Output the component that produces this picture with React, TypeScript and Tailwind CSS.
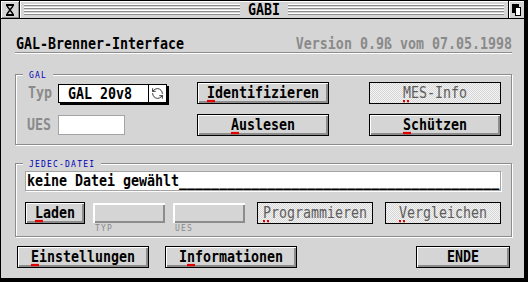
import { RefreshCcw } from 'lucide-react';

type BtnProps = {
  text: string;
  hot?: number;
  w: string;
  disabled?: boolean;
  className?: string;
};

// the Atari system font is taller than DejaVu at the same width
const tall = 'inline-block scale-y-[1.15]';

const Hot = ({ text, hot, disabled }: { text: string; hot?: number; disabled?: boolean }) => {
  if (hot === undefined) return <>{text}</>;
  return (
    <>
      {text.slice(0, hot)}
      <span
        className={
          disabled
            ? 'underline decoration-dotted decoration-[#e00000] decoration-2 underline-offset-[2px]'
            : 'underline decoration-[#e00000] decoration-2 underline-offset-[2px]'
        }
      >
        {text[hot]}
      </span>
      {text.slice(hot + 1)}
    </>
  );
};

const Btn = ({ text, hot, w, disabled, className = '' }: BtnProps) => {
  const look = disabled
    ? 'bg-[repeating-conic-gradient(#d5d5d5_0%_25%,#f4f4f4_0%_50%)] bg-[length:2px_2px] text-[#5c5c5c] font-normal'
    : 'bg-[#d5d5d5] shadow-[inset_1px_1px_0_#fff,inset_-2px_-2px_0_#8c8c8c] text-black font-bold';
  return (
    <div
      className={`${w} h-[22px] shrink-0 border border-black flex items-center justify-center leading-5 ${look} ${className}`}
    >
      <span className={tall}>
        <Hot text={text} hot={hot} disabled={disabled} />
      </span>
    </div>
  );
};

const Frame = ({ title, className, children }: { title: string; className: string; children: React.ReactNode }) => (
  <div
    className={`relative ml-[14px] w-[497px] border border-[#8c8c8c] shadow-[inset_1px_1px_0_#fff,1px_1px_0_#fff] ${className}`}
  >
    <span className="absolute left-[7px] -top-[3px] px-[6px] bg-[#d5d5d5] text-[8px] leading-[8px] tracking-[1.2px] text-[#0000b4]">
      {title}
    </span>
    {children}
  </div>
);

const Lines = ({ className }: { className: string }) => (
  <div
    className={`flex-1 h-[11px] bg-[repeating-linear-gradient(to_bottom,#ffffff_0px,#ffffff_1px,#8c8c8c_1px,#8c8c8c_2px,#d5d5d5_2px,#d5d5d5_3px)] ${className}`}
  />
);

export default function App() {
  return (
    <div className="w-[528px] h-[282px] bg-black font-['DejaVu_Sans_Mono',monospace] text-[13.3px]">
      <div className="w-[525px] h-[279px] border border-black bg-[#d5d5d5] flex flex-col">
        {/* title bar */}
        <div className="h-[18px] shrink-0 border-b border-black flex">
          <div className="w-[19px] border-r border-black shadow-[inset_1px_1px_0_#fff,inset_-1px_-1px_0_#8c8c8c] flex items-center justify-center">
            <svg width="8" height="12" viewBox="0 0 8 12">
              <rect x="0" y="0" width="8" height="2" fill="#000" />
              <rect x="0" y="10" width="8" height="2" fill="#000" />
              <path d="M1 2 L7 10 M7 2 L1 10" stroke="#000" strokeWidth="1.4" />
            </svg>
          </div>
          <div className="flex-1 flex items-center shadow-[inset_1px_1px_0_#fff]">
            <Lines className="ml-[4px]" />
            <div className="px-[8px] font-bold leading-[17px]">
              <span className={tall}>GABI</span>
            </div>
            <Lines className="mr-[4px]" />
          </div>
          <div className="w-[16px] border-l border-black shadow-[inset_1px_1px_0_#fff] flex items-center justify-center">
            <svg width="9" height="12" viewBox="0 0 9 12">
              <rect x="0" y="0" width="7" height="9" fill="#000" />
              <rect x="3.5" y="3.5" width="5" height="8" fill="#fff" stroke="#000" />
            </svg>
          </div>
        </div>

        {/* header */}
        <div className="ml-[14px] mt-[17px] w-[497px] h-[17px] shrink-0 border-b border-[#8c8c8c] shadow-[0_1px_0_#fff] flex justify-between pl-[1px] font-bold leading-4">
          <span className={tall}>GAL-Brenner-Interface</span>
          <span className={`${tall} text-[#8a8a8a]`}>Version 0.9ß vom 07.05.1998</span>
        </div>

        {/* GAL */}
        <Frame title="GAL" className="mt-[21px] h-[71px] shrink-0 pt-[7px]">
          <div className="flex h-[22px]">
            <div className="w-[42px] pl-[12px] text-[#8a8a8a] font-bold leading-[22px]">
              <span className={tall}>Typ</span>
            </div>
            <div className="w-[139px]">
              <div className="mt-[2px] w-[109px] h-[19px] border border-black bg-white shadow-[2px_2px_0_#000] flex">
                <div className="flex-1 pl-[9px] font-bold leading-[17px]">
                  <span className={tall}>GAL 20v8</span>
                </div>
                <div className="w-[18px] border-l border-black flex items-center justify-center">
                  <RefreshCcw size={13} strokeWidth={1.4} color="#000" />
                </div>
              </div>
            </div>
            <Btn text="Identifizieren" hot={0} w="w-[132px]" />
            <div className="w-[40px]" />
            <Btn text="MES-Info" hot={0} w="w-[132px]" disabled />
          </div>
          <div className="flex h-[22px] mt-[10px]">
            <div className="w-[42px] pl-[11px] text-[#8a8a8a] font-bold leading-[22px]">
              <span className={tall}>UES</span>
            </div>
            <div className="w-[139px]">
              <div className="mt-[1px] w-[67px] h-[20px] border border-[#a4a4a4] bg-white" />
            </div>
            <Btn text="Auslesen" hot={0} w="w-[132px]" />
            <div className="w-[40px]" />
            <Btn text="Schützen" hot={0} w="w-[132px]" />
          </div>
        </Frame>

        {/* JEDEC */}
        <Frame title="JEDEC-DATEI" className="mt-[18px] h-[74px] shrink-0 pt-[7px]">
          <div className="ml-[9px] w-[476px] h-[20px] border border-[#a4a4a4] shadow-[1px_1px_0_#fff] bg-white pl-[1px] font-bold leading-[18px] whitespace-pre overflow-hidden">
            <span className={tall}>keine Datei gewählt________________________________________</span>
          </div>
          <div className="flex items-start mt-[11px]">
            <Btn text="Laden" hot={0} w="w-[60px]" className="ml-[9px]" />
            <div className="ml-[8px] w-[72px] flex flex-col">
              <div className="mt-[1px] h-[20px] bg-[#d5d5d5] shadow-[inset_2px_2px_0_#fff,inset_-2px_-2px_0_#8c8c8c]" />
              <span className="mt-[2px] pl-[2px] text-[8px] leading-[8px] tracking-[1.2px] text-[#8a8a8a]">TYP</span>
            </div>
            <div className="ml-[8px] w-[72px] flex flex-col">
              <div className="mt-[1px] h-[20px] bg-[#d5d5d5] shadow-[inset_2px_2px_0_#fff,inset_-2px_-2px_0_#8c8c8c]" />
              <span className="mt-[2px] pl-[2px] text-[8px] leading-[8px] tracking-[1.2px] text-[#8a8a8a]">UES</span>
            </div>
            <Btn text="Programmieren" hot={0} w="w-[116px]" disabled className="ml-[12px]" />
            <Btn text="Vergleichen" hot={0} w="w-[116px]" disabled className="ml-[12px]" />
          </div>
        </Frame>

        {/* bottom */}
        <div className="flex mt-[9px] ml-[16px]">
          <Btn text="Einstellungen" hot={0} w="w-[132px]" />
          <Btn text="Informationen" hot={1} w="w-[132px]" className="ml-[16px]" />
          <Btn text="ENDE" w="w-[94px]" className="ml-[119px]" />
        </div>
      </div>
    </div>
  );
}
